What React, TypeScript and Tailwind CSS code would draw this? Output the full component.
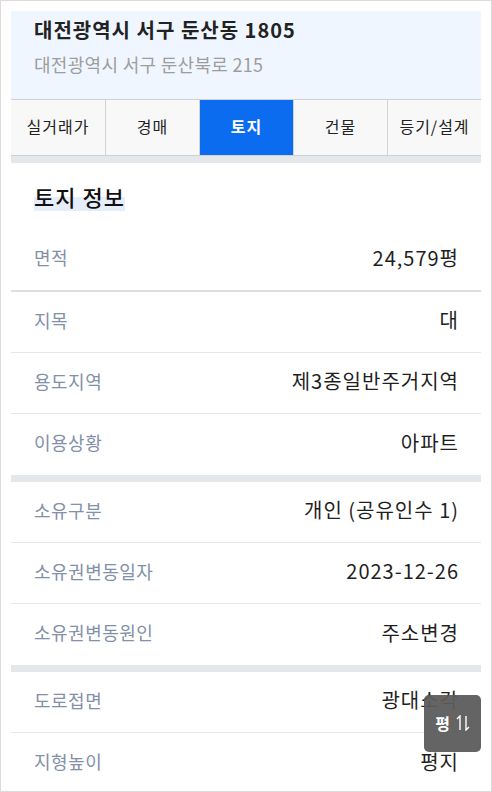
import React from 'react';

type Row = { label: string; value: string; thick?: boolean; last?: boolean };

const sections: Row[][] = [
  [
    { label: '면적', value: '24,579평', thick: true },
    { label: '지목', value: '대' },
    { label: '용도지역', value: '제3종일반주거지역' },
    { label: '이용상황', value: '아파트', last: true },
  ],
  [
    { label: '소유구분', value: '개인 (공유인수 1)' },
    { label: '소유권변동일자', value: '2023-12-26' },
    { label: '소유권변동원인', value: '주소변경', last: true },
  ],
  [
    { label: '도로접면', value: '광대소각' },
    { label: '지형높이', value: '평지', last: true },
  ],
];

const tabs = ['실거래가', '경매', '토지', '건물', '등기/설계'];

function InfoRow({ row }: { row: Row }) {
  const border = row.last
    ? 'h-[61px]'
    : row.thick
    ? 'h-[63px] border-b-2 border-[#dedede]'
    : 'h-[61px] border-b border-[#e6e6e6]';
  return (
    <div className={`flex items-center justify-between pb-[4px] pl-[23px] pr-[22px] ${border}`}>
      <span className="text-[18px] tracking-[0.5px] text-[#8390a9]">{row.label}</span>
      <span className="text-[20px] tracking-[1px] text-[#1f1f1f]">{row.value}</span>
    </div>
  );
}

export default function App() {
  return (
    <div
      className="relative w-[492px] h-[792px] overflow-hidden border border-[#dcdcdc] bg-white p-[10px]"
      style={{ fontFamily: '"Noto Sans CJK KR", "Noto Sans", sans-serif' }}
    >
      <div className="flex flex-col">
        {/* address header */}
        <div className="h-[88px] bg-[#f0f6ff] px-[23px] pt-[4px]">
          <div className="text-[20px] font-bold leading-[30px] tracking-[1px] text-[#222]">대전광역시 서구 둔산동 1805</div>
          <div className="mt-[6px] text-[18px] leading-[26px] tracking-[0.3px] text-[#9d9d9d]">대전광역시 서구 둔산북로 215</div>
        </div>

        {/* tabs */}
        <div className="grid h-[57px] grid-cols-5 border-y border-[#cfcfcf] bg-[#f8f8f8]">
          {tabs.map((t, i) => (
            <div
              key={t}
              className={`flex items-center justify-center pb-[3px] text-[16px] tracking-[1px] ${i > 0 ? 'border-l border-[#d2d2d2]' : ''} ${
                t === '토지' ? 'bg-[#0b6cf0] font-bold text-white' : 'text-[#222]'
              }`}
            >
              {t}
            </div>
          ))}
        </div>
        <div className="h-[7px] bg-[#e5e8eb]" />

        {/* heading */}
        <div className="flex h-[66px] items-center px-[23px]">
          <span className="bg-[linear-gradient(to_bottom,transparent_52%,#e6eefb_52%)] text-[22px] font-medium leading-[30px] tracking-[1px] text-[#111]">
            토지 정보
          </span>
        </div>

        {sections.map((rows, si) => (
          <div key={si}>
            {si > 0 && <div className="h-[7px] bg-[#e5e8eb]" />}
            {rows.map((r) => (
              <InfoRow key={r.label} row={r} />
            ))}
          </div>
        ))}
      </div>

      {/* unit toggle */}
      <button className="absolute left-[423px] top-[694px] flex h-[57px] w-[57px] items-center justify-center gap-[6px] rounded-[5px] bg-[#5c5c5c]/95 pb-[2px] text-white">
        <span className="text-[16px] font-bold">평</span>
        <svg width="14" height="16" viewBox="0 0 14 16" fill="none" stroke="currentColor" strokeWidth="1.4">
          <path d="M4 15V1L1 4" />
          <path d="M10 1v14l3-3" />
        </svg>
      </button>
    </div>
  );
}
